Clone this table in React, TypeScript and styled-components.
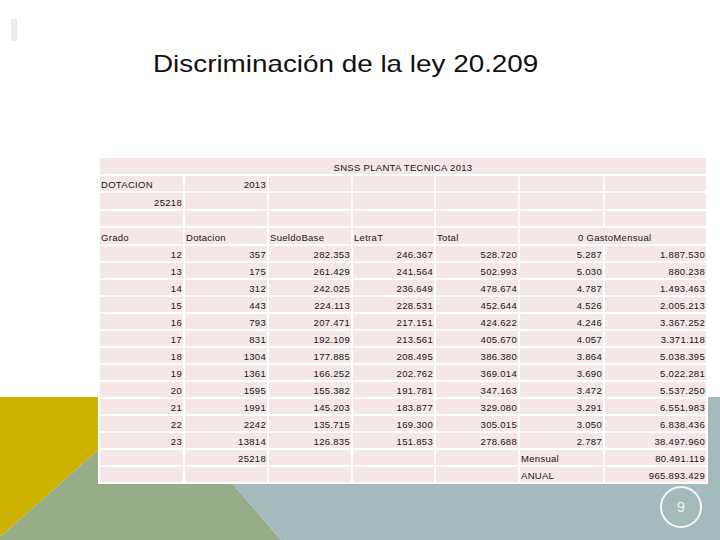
import React from "react";
import styled, { createGlobalStyle } from "styled-components";

const GlobalStyle = createGlobalStyle`
  html, body { margin: 0; padding: 0; background: #ffffff; }
  body { font-family: "Liberation Sans", Arial, sans-serif; }
`;

const Slide = styled.div`
  position: relative;
  width: 720px;
  height: 540px;
  overflow: hidden;
  background: #ffffff;
`;

const Backdrop = styled.svg`
  position: absolute;
  inset: 0;
  z-index: 0;
`;

const Content = styled.div`
  position: relative;
  z-index: 1;
  display: flex;
  flex-direction: column;
`;

const Header = styled.div`
  display: flex;
  align-items: flex-start;
  height: 78px;
`;

const AccentBar = styled.div`
  width: 6px;
  height: 22px;
  margin: 19px 0 0 11px;
  background: #ebebeb;
`;

const Title = styled.h1`
  margin: 50px 0 0 136px;
  font-family: "Liberation Sans", Arial, sans-serif;
  font-weight: 400;
  font-size: 24px;
  line-height: 28px;
  color: #111111;
  white-space: nowrap;
  transform: scaleX(1.16);
  transform-origin: left center;
`;

const Table = styled.div`
  display: grid;
  grid-template-columns: 83px 82px 82px 81px 82px 83px 101px;
  grid-template-rows: repeat(5, 15.5px) repeat(14, 15px);
  gap: 2px;
  padding: 2px;
  margin: 78px 0 0 98px;
  width: fit-content;
  background: #ffffff;
`;

const Cell = styled.div<{ $align: "left" | "right" | "center"; $span: number; $indent: number }>`
  grid-column: span ${(p) => p.$span};
  display: flex;
  align-items: flex-end;
  justify-content: ${(p) =>
    p.$align === "left" ? "flex-start" : p.$align === "center" ? "center" : "flex-end"};
  padding: 0 1px 1px ${(p) => 1 + p.$indent}px;
  background: #f5e6e7;
  font-family: "Liberation Sans", Arial, sans-serif;
  font-size: 9.5px;
  letter-spacing: 0.3px;
  line-height: 10px;
  color: #151515;
  white-space: nowrap;
  overflow: visible;
`;

const Footer = styled.div`
  display: flex;
  justify-content: flex-end;
  padding: 2px 18px 0 0;
`;

const PageBadge = styled.div`
  width: 38px;
  height: 38px;
  border: 2px solid #f7f7f7;
  border-radius: 50%;
  display: flex;
  align-items: center;
  justify-content: center;
  font-family: "Liberation Sans", Arial, sans-serif;
  font-size: 15px;
  color: #f4f4f4;
`;

type CellDef = { t?: string; a?: "left" | "right" | "center"; s?: number; i?: number };

const blank = (n: number): CellDef[] => Array.from({ length: n }, () => ({}));

const data: string[][] = [
  ["12", "357", "282.353", "246.367", "528.720", "5.287", "1.887.530"],
  ["13", "175", "261.429", "241.564", "502.993", "5.030", "880.238"],
  ["14", "312", "242.025", "236.649", "478.674", "4.787", "1.493.463"],
  ["15", "443", "224.113", "228.531", "452.644", "4.526", "2.005.213"],
  ["16", "793", "207.471", "217.151", "424.622", "4.246", "3.367.252"],
  ["17", "831", "192.109", "213.561", "405.670", "4.057", "3.371.118"],
  ["18", "1304", "177.885", "208.495", "386.380", "3.864", "5.038.395"],
  ["19", "1361", "166.252", "202.762", "369.014", "3.690", "5.022.281"],
  ["20", "1595", "155.382", "191.781", "347.163", "3.472", "5.537.250"],
  ["21", "1991", "145.203", "183.877", "329.080", "3.291", "6.551.983"],
  ["22", "2242", "135.715", "169.300", "305.015", "3.050", "6.838.436"],
  ["23", "13814", "126.835", "151.853", "278.688", "2.787", "38.497.960"],
];

const rows: CellDef[][] = [
  [{ t: "SNSS PLANTA TECNICA 2013", a: "center", s: 7 }],
  [{ t: "DOTACION", a: "left" }, { t: "2013", a: "right" }, ...blank(5)],
  [{ t: "25218", a: "right" }, ...blank(6)],
  blank(7),
  [
    { t: "Grado", a: "left" },
    { t: "Dotacion", a: "left" },
    { t: "SueldoBase", a: "left" },
    { t: "LetraT", a: "left" },
    { t: "Total", a: "left" },
    { t: "0 GastoMensual", a: "left", s: 2, i: 57 },
  ],
  ...data.map((r) => r.map((t) => ({ t, a: "right" as const }))),
  [{}, { t: "25218", a: "right" }, ...blank(3), { t: "Mensual", a: "left" }, { t: "80.491.119", a: "right" }],
  [...blank(5), { t: "ANUAL", a: "left" }, { t: "965.893.429", a: "right" }],
];

export default function App() {
  return (
    <>
      <GlobalStyle />
      <Slide>
        <Backdrop width="720" height="540" viewBox="0 0 720 540">
          <polygon points="0,397 158,397 0,537" fill="#cdb300" />
          <polygon points="158,397 0,537 0,540 281,540" fill="#97ac89" />
          <polygon points="158,397 720,397 720,540 281,540" fill="#a3bbbd" />
        </Backdrop>
        <Content>
          <Header>
            <AccentBar />
            <Title>Discriminación de la ley 20.209</Title>
          </Header>
          <Table>
            {rows.map((row, ri) =>
              row.map((c, ci) => (
                <Cell key={`${ri}-${ci}`} $align={c.a ?? "left"} $span={c.s ?? 1} $indent={c.i ?? 0}>
                  {c.t ?? ""}
                </Cell>
              ))
            )}
          </Table>
          <Footer>
            <PageBadge>9</PageBadge>
          </Footer>
        </Content>
      </Slide>
    </>
  );
}
